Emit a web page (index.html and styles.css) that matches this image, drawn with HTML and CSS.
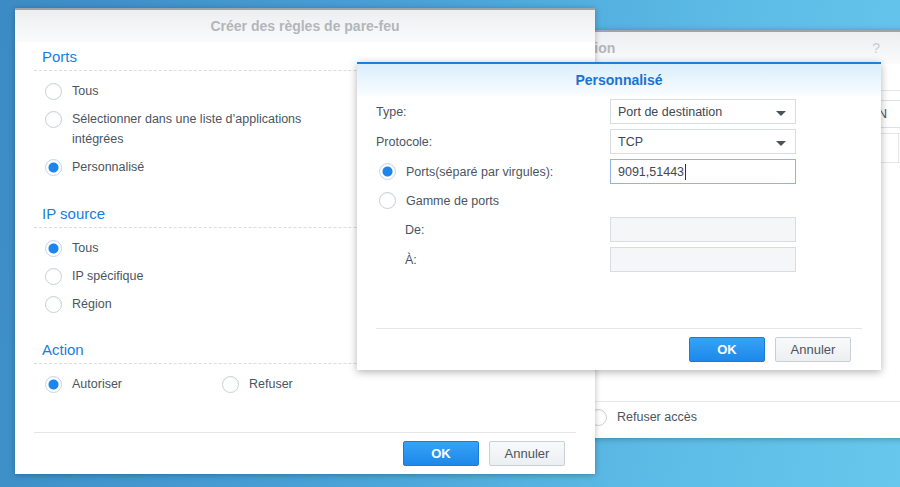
FILE: index.html
```html
<!DOCTYPE html>
<html>
<head>
  <meta charset="UTF-8">
  <title>Créer des règles de pare-feu</title>
  <link rel="stylesheet" href="styles.css">
</head>
<body>
  <div class="desktop">

    <!-- fenêtre arrière -->
    <div class="window back-window">
      <div class="title-bar back-title">
        <span class="back-title-text">Connexion</span>
        <span class="help">?</span>
      </div>
      <div class="tab-strip">
        <span class="tab"></span>
        <span class="tab"></span>
        <span class="tab"></span>
      </div>
      <div class="back-body">
        <div class="back-field">Région : CN</div>
        <div class="back-grid">
          <span></span><span></span><span></span>
        </div>
      </div>
      <div class="back-footer">
        <label class="radio"><span class="dot"></span>Refuser accès</label>
      </div>
    </div>

    <!-- fenêtre principale -->
    <div class="window main-window">
      <div class="title-bar">Créer des règles de pare-feu</div>
      <div class="main-body">
        <div class="section">
          <h2 class="section-title">Ports</h2>
          <label class="radio"><span class="dot"></span>Tous</label>
          <label class="radio"><span class="dot"></span>Sélectionner dans une liste d’applications<br>intégrées</label>
          <label class="radio"><span class="dot checked"></span>Personnalisé</label>
        </div>
        <div class="section">
          <h2 class="section-title">IP source</h2>
          <label class="radio"><span class="dot checked"></span>Tous</label>
          <label class="radio"><span class="dot"></span>IP spécifique</label>
          <label class="radio"><span class="dot"></span>Région</label>
        </div>
        <div class="section">
          <h2 class="section-title">Action</h2>
          <div class="radio-pair">
            <label class="radio"><span class="dot checked"></span>Autoriser</label>
            <label class="radio"><span class="dot"></span>Refuser</label>
          </div>
        </div>
      </div>
      <div class="footer">
        <button class="btn btn-primary">OK</button>
        <button class="btn">Annuler</button>
      </div>
    </div>

    <!-- dialogue Personnalisé -->
    <div class="window dialog">
      <div class="dialog-title">Personnalisé</div>
      <div class="dialog-body">
        <div class="form-row">
          <span class="form-label">Type:</span>
          <div class="field select">Port de destination<span class="arrow"></span></div>
        </div>
        <div class="form-row">
          <span class="form-label">Protocole:</span>
          <div class="field select">TCP<span class="arrow"></span></div>
        </div>
        <div class="form-row">
          <label class="radio form-label"><span class="dot checked"></span>Ports(séparé par virgules):</label>
          <div class="field focused">9091,51443<span class="caret"></span></div>
        </div>
        <div class="form-row short">
          <label class="radio form-label"><span class="dot"></span>Gamme de ports</label>
        </div>
        <div class="form-row">
          <span class="form-label indent">De:</span>
          <div class="field disabled"></div>
        </div>
        <div class="form-row">
          <span class="form-label indent">À:</span>
          <div class="field disabled"></div>
        </div>
      </div>
      <div class="footer">
        <button class="btn btn-primary">OK</button>
        <button class="btn">Annuler</button>
      </div>
    </div>

  </div>
</body>
</html>
```

FILE: styles.css
```css
html, body {
    margin: 0;
    height: 100%;
}
body {
    font-family: 'Liberation Sans', Arial, sans-serif;
    font-size: 12.5px;
    color: #4b5562;
    overflow: hidden;
    background: linear-gradient(100deg, #3c8bc5 0%, #4ba3d8 45%, #5dbce6 75%, #67c7ec 100%);
}
.desktop {
    position: relative;
    width: 900px;
    height: 487px;
}

/* fenêtres */
.window {
    position: absolute;
    background: #fff;
    display: flex;
    flex-direction: column;
    box-shadow: 0 1px 6px rgba(0, 0, 0, 0.28);
}
.title-bar {
    height: 32px;
    border-top: 2px solid #9ea4aa;
    background: linear-gradient(#eceef0, #fbfbfc);
    display: flex;
    align-items: center;
    justify-content: center;
    font-weight: bold;
    font-size: 14px;
    color: #b2b6bb;
}

.main-window {
    left: 15px;
    top: 8px;
    width: 580px;
    height: 466px;
}
.main-body {
    flex: 1;
    padding: 2px 19px 0;
}
.section {
    display: flex;
    flex-direction: column;
    margin-bottom: 20px;
}
.section:nth-child(2) {
    margin-bottom: 19px;
}
.section-title {
    margin: 0 0 6px;
    height: 26px;
    line-height: 26px;
    padding-left: 8px;
    font-size: 15px;
    font-weight: normal;
    color: #1a7de0;
    border-bottom: 1px dashed #d6dde4;
}
.radio {
    display: flex;
    align-items: flex-start;
    line-height: 20px;
    padding: 4px 0;
}
.dot {
    flex: none;
    box-sizing: border-box;
    width: 17px;
    height: 17px;
    margin: 2px 10px 0 11px;
    border: 1px solid #c9d0d8;
    border-radius: 50%;
    background: #fff;
    box-shadow: inset 0 1px 1px rgba(0, 0, 0, 0.04);
}
.dot.checked {
    background: radial-gradient(circle, #1b86ee 0, #1b86ee 4.5px, #fff 5.5px);
    border-color: #c4d6ea;
}
.radio-pair {
    display: grid;
    grid-template-columns: 177px 1fr;
}

.footer {
    margin: 0 19px;
    border-top: 1px solid #e3e6e9;
    padding: 8px 11px 8px 0;
    display: flex;
    justify-content: flex-end;
    gap: 10px;
}
.btn {
    width: 76px;
    height: 25px;
    font-family: inherit;
    font-size: 13px;
    color: #4b5562;
    border: 1px solid #c8cfd6;
    border-radius: 2px;
    background: linear-gradient(#f8f9fa, #eceff2);
    padding: 0;
}
.btn-primary {
    color: #fff;
    font-weight: bold;
    border-color: #1b7bd6;
    background: linear-gradient(#37a3f6, #1c88ea);
}

/* dialogue */
.dialog {
    left: 357px;
    top: 62px;
    width: 524px;
    height: 308px;
    box-shadow: 0 2px 8px rgba(0, 0, 0, 0.3);
}
.dialog-title {
    height: 32px;
    border-top: 2px solid #1b7fe2;
    background: linear-gradient(#dbeefc, #fafdff);
    display: flex;
    align-items: center;
    justify-content: center;
    font-weight: bold;
    font-size: 14px;
    color: #1a72d6;
}
.dialog-body {
    flex: 1;
    padding: 3px 19px 0;
    display: flex;
    flex-direction: column;
    gap: 5px;
}
.form-row {
    display: flex;
    align-items: center;
    height: 25px;
}
.form-row.short {
    height: 23px;
}
.form-label {
    width: 234px;
    flex: none;
}
.form-label.radio {
    padding: 0;
    align-items: center;
}
.form-label.radio .dot {
    margin: 0 10px 0 3px;
}
.indent {
    padding-left: 29px;
    width: 205px;
}
.field {
    box-sizing: border-box;
    width: 186px;
    height: 25px;
    border: 1px solid #d7dde3;
    padding: 0 7px;
    display: flex;
    align-items: center;
    position: relative;
    color: #3f4853;
}
.field.focused {
    border-color: #8fb3ea;
}
.field.disabled {
    background: #f4f6f8;
}
.arrow {
    position: absolute;
    right: 9px;
    top: 11px;
    border-left: 5px solid transparent;
    border-right: 5px solid transparent;
    border-top: 5px solid #4a525c;
}
.caret {
    width: 1px;
    height: 16px;
    background: #333;
    margin-left: 1px;
}

/* fenêtre arrière */
.back-window {
    left: 400px;
    top: 30px;
    width: 520px;
    height: 408px;
}
.back-title {
    justify-content: space-between;
    padding: 0 0 0 143px;
}
.back-title-text {
    color: #b2b6bb;
}
.help {
    margin-right: 40px;
    font-weight: normal;
    font-size: 14px;
    color: #c9cdd2;
}
.tab-strip {
    height: 26px;
    display: flex;
    border-bottom: 1px solid #e4e7ea;
}
.tab {
    width: 77px;
    border-right: 1px solid #e1e4e8;
}
.tab:first-child {
    width: 237px;
}
.back-body {
    flex: 1;
    padding: 9px 0 0 40px;
}
.back-field {
    height: 26px;
    border: 1px solid #dce1e6;
    display: flex;
    align-items: center;
    justify-content: flex-end;
    padding-right: 32px;
    white-space: nowrap;
}
.back-grid {
    margin-top: 5px;
    height: 28px;
    display: grid;
    grid-template-columns: 457px 20px 1fr;
    border: 1px solid #e4e7ea;
}
.back-grid span + span {
    border-left: 1px solid #e4e7ea;
}
.back-footer {
    border-top: 1px solid #e6e9ec;
    height: 30px;
    padding-bottom: 6px;
    display: flex;
    align-items: center;
    padding-left: 187px;
}
.back-footer .radio {
    padding: 0;
    align-items: center;
}
.back-footer .dot {
    margin: 0 10px 0 3px;
}
```
